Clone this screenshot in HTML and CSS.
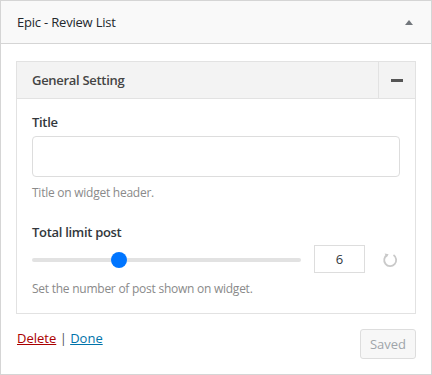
FILE: index.html
```html
<!DOCTYPE html>
<html lang="en">
<head>
  <meta charset="UTF-8">
  <title>Epic - Review List</title>
  <link rel="stylesheet" href="styles.css">
</head>
<body>
<div class="widget">
  <div class="widget-top">
    <h3 class="widget-title">Epic - Review List</h3>
    <span class="widget-arrow"></span>
  </div>
  <div class="widget-inside">
    <div class="section">
      <div class="section-head">
        <span class="section-title">General Setting</span>
        <button class="section-toggle"><span class="minus"></span></button>
      </div>
      <div class="section-body">
        <div class="field">
          <label for="title">Title</label>
          <input type="text" id="title" class="text-input" />
          <p class="help">Title on widget header.</p>
        </div>
        <div class="field field-slider">
          <label for="limit">Total limit post</label>
          <div class="slider-row">
            <input type="range" id="limit" class="range" min="1" max="17" value="6" />
            <input type="text" class="number-input" value="6" />
            <svg class="reset" width="16" height="16" viewBox="0 0 16 16">
              <path d="M5.2 2.9 A6 6 0 1 0 11.5 3.1" fill="none" stroke="#c9c9c9" stroke-width="1.8" />
              <path d="M2.6 1.6 L6.6 2.2 L4.6 5.6 Z" fill="#c9c9c9" />
            </svg>
          </div>
          <p class="help">Set the number of post shown on widget.</p>
        </div>
      </div>
    </div>
    <div class="widget-actions">
      <div class="links">
        <a href="#" class="delete">Delete</a> | <a href="#" class="done">Done</a>
      </div>
      <button class="btn-saved" disabled>Saved</button>
    </div>
  </div>
</div>
</body>
</html>
```

FILE: styles.css
```css
body {
  margin: 0;
  padding: 0;
  font-family: "Open Sans", "Noto Sans", sans-serif;
  font-size: 13px;
  color: #23282d;
  background: #fff;
}

.widget {
  width: 432px;
  height: 375px;
  box-sizing: border-box;
  border: 1px solid #d5d5d5;
  background: #fff;
}

.widget-top {
  height: 42px;
  display: flex;
  align-items: center;
  justify-content: space-between;
  padding: 0 17px 0 16px;
  background: #f9f9f9;
  border-bottom: 1px solid #d5d5d5;
}

.widget-title {
  margin: 0;
  font-size: 13px;
  font-weight: 400;
  letter-spacing: -0.2px;
  color: #23282d;
}

.widget-arrow {
  width: 0;
  height: 0;
  border-left: 4px solid transparent;
  border-right: 4px solid transparent;
  border-bottom: 5px solid #72777c;
  margin-right: 1px;
}

.widget-inside {
  padding: 17px 15px 0;
}

.section {
  border: 1px solid #e2e2e2;
}

.section-head {
  height: 36px;
  display: flex;
  align-items: stretch;
  background: #f3f3f3;
  border-bottom: 1px solid #e2e2e2;
}

.section-title {
  flex: 1;
  display: flex;
  align-items: center;
  padding-left: 15px;
  font-weight: 600;
  color: #444;
  letter-spacing: -0.3px;
}

.section-toggle {
  width: 37px;
  border: none;
  border-left: 1px solid #e2e2e2;
  background: #f3f3f3;
  display: flex;
  align-items: center;
  justify-content: center;
  padding: 0;
}

.minus {
  display: block;
  width: 12px;
  height: 3px;
  background: #555;
}

.section-body {
  padding: 14px 15px 15px;
}

.field label {
  display: block;
  font-weight: 600;
  color: #32373c;
  line-height: 18px;
  letter-spacing: -0.3px;
}

.text-input {
  display: block;
  box-sizing: border-box;
  width: 100%;
  height: 41px;
  margin-top: 5px;
  border: 1px solid #ddd;
  border-radius: 4px;
  background: #fff;
}

.help {
  margin: 7px 0 0;
  font-size: 12px;
  line-height: 18px;
  color: #8a8a8a;
  letter-spacing: -0.25px;
}

.field-slider {
  margin-top: 21px;
}

.slider-row {
  display: flex;
  align-items: center;
  margin-top: 4px;
}

.range {
  -webkit-appearance: none;
  appearance: none;
  width: 269px;
  height: 16px;
  margin: 2px 13px 0 0;
  background: transparent;
}

.range::-webkit-slider-runnable-track {
  height: 4px;
  background: #e2e2e2;
  border-radius: 2px;
}

.range::-webkit-slider-thumb {
  -webkit-appearance: none;
  width: 16px;
  height: 16px;
  margin-top: -6px;
  border-radius: 50%;
  background: #0075ff;
  border: none;
}

.number-input {
  box-sizing: border-box;
  width: 51px;
  height: 28px;
  border: 1px solid #ddd;
  text-align: center;
  font-family: inherit;
  font-size: 13px;
  color: #32373c;
  padding: 0;
}

.reset {
  margin-left: 17px;
  margin-top: 2px;
}

.widget-actions {
  display: flex;
  justify-content: space-between;
  align-items: flex-start;
  padding-top: 15px;
}

.links {
  padding: 0 0 0 1px;
  color: #555;
  line-height: 18px;
}

.delete {
  color: #a00;
}

.done {
  color: #0073aa;
}

.btn-saved {
  width: 56px;
  height: 30px;
  border: 1px solid #ddd;
  border-radius: 3px;
  background: #f7f7f7;
  color: #a0a5aa;
  font-family: inherit;
  font-size: 13px;
  padding: 0;
}
```
